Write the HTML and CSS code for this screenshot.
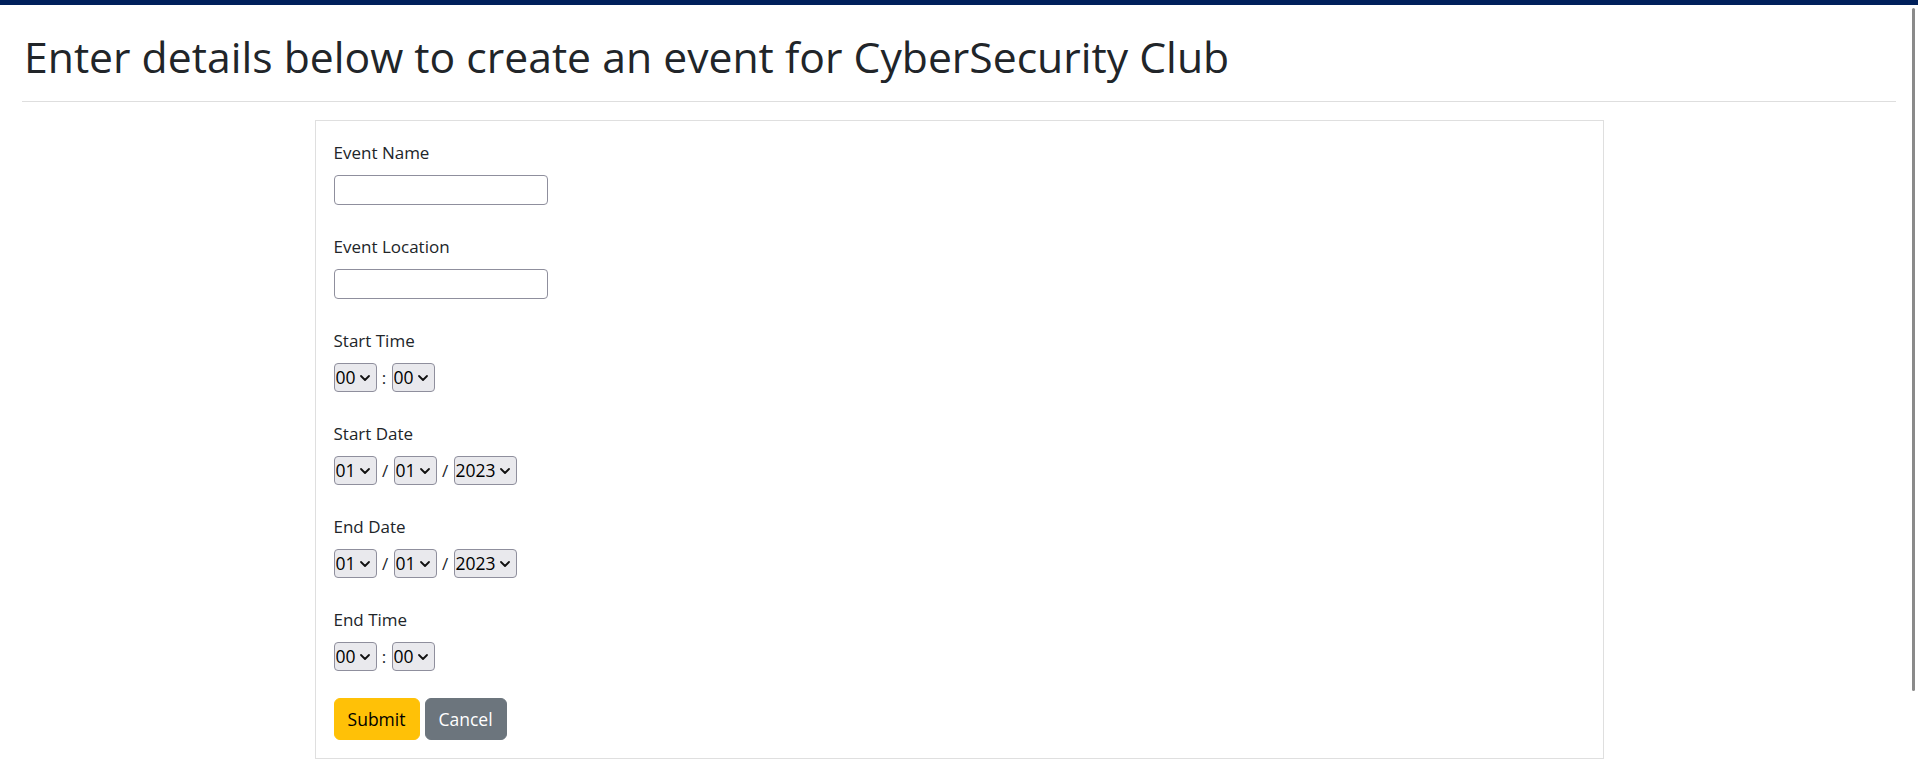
FILE: index.html
```html
<!DOCTYPE html>
<html lang="en">
<head>
<meta charset="utf-8">
<title>Create Event - CyberSecurity Club</title>
<link rel="stylesheet" href="styles.css">
</head>
<body>
<div class="topbar"></div>
<header class="page-head">
  <h1>Enter details below to create an event for CyberSecurity Club</h1>
  <hr class="rule">
</header>
<main class="wrap">
  <form class="card">
    <div class="field">
      <label for="ev-name">Event Name</label>
      <input id="ev-name" class="text-in" type="text">
    </div>
    <div class="field">
      <label for="ev-loc">Event Location</label>
      <input id="ev-loc" class="text-in" type="text">
    </div>
    <div class="field">
      <label>Start Time</label>
      <div class="pick">
        <span class="sel w2"><select><option>00</option></select><svg class="chev" viewBox="0 0 10 6"><path d="M1 1l4 4 4-4"/></svg></span>
        <span class="sep colon">:</span>
        <span class="sel w2"><select><option>00</option></select><svg class="chev" viewBox="0 0 10 6"><path d="M1 1l4 4 4-4"/></svg></span>
      </div>
    </div>
    <div class="field">
      <label>Start Date</label>
      <div class="pick">
        <span class="sel w2"><select><option>01</option></select><svg class="chev" viewBox="0 0 10 6"><path d="M1 1l4 4 4-4"/></svg></span>
        <span class="sep slash">/</span>
        <span class="sel w2"><select><option>01</option></select><svg class="chev" viewBox="0 0 10 6"><path d="M1 1l4 4 4-4"/></svg></span>
        <span class="sep slash">/</span>
        <span class="sel w4"><select><option>2023</option></select><svg class="chev" viewBox="0 0 10 6"><path d="M1 1l4 4 4-4"/></svg></span>
      </div>
    </div>
    <div class="field">
      <label>End Date</label>
      <div class="pick">
        <span class="sel w2"><select><option>01</option></select><svg class="chev" viewBox="0 0 10 6"><path d="M1 1l4 4 4-4"/></svg></span>
        <span class="sep slash">/</span>
        <span class="sel w2"><select><option>01</option></select><svg class="chev" viewBox="0 0 10 6"><path d="M1 1l4 4 4-4"/></svg></span>
        <span class="sep slash">/</span>
        <span class="sel w4"><select><option>2023</option></select><svg class="chev" viewBox="0 0 10 6"><path d="M1 1l4 4 4-4"/></svg></span>
      </div>
    </div>
    <div class="field last">
      <label>End Time</label>
      <div class="pick">
        <span class="sel w2"><select><option>00</option></select><svg class="chev" viewBox="0 0 10 6"><path d="M1 1l4 4 4-4"/></svg></span>
        <span class="sep colon">:</span>
        <span class="sel w2"><select><option>00</option></select><svg class="chev" viewBox="0 0 10 6"><path d="M1 1l4 4 4-4"/></svg></span>
      </div>
    </div>
    <div class="actions">
      <button type="submit" class="btn btn-submit">Submit</button>
      <button type="button" class="btn btn-cancel">Cancel</button>
    </div>
  </form>
</main>
<div class="scrollbar"></div>
</body>
</html>
```
FILE: styles.css
```css
* { box-sizing: border-box; }

html, body {
  margin: 0;
  padding: 0;
  background: #ffffff;
}

body {
  font-family: "Open Sans", "Noto Sans", "Liberation Sans", sans-serif;
  color: #212529;
  font-size: 17px;
  position: relative;
  min-height: 777px;
}

.topbar {
  height: 5px;
  background: #00205b;
}

.page-head {
  padding: 0 22px;
}

.page-head h1 {
  margin: 27px 0 19px 0;
  font-size: 42.7px;
  line-height: 50px;
  font-weight: 400;
  color: #212529;
  padding-left: 2px;
  white-space: nowrap;
}

.rule {
  margin: 0;
  border: 0;
  height: 0;
  border-top: 1px solid #dedede;
}

.wrap {
  display: flex;
  justify-content: center;
  margin-top: 18px;
}

.card {
  width: 1289px;
  border: 1px solid #dfdfdf;
  padding: 19px 18px 18px 18px;
  display: flex;
  flex-direction: column;
}

.field {
  display: flex;
  flex-direction: column;
  align-items: flex-start;
  margin-bottom: 29px;
}

.field.last {
  margin-bottom: 27px;
}

.field label {
  display: block;
  font-size: 17px;
  line-height: 26px;
  margin-bottom: 9px;
  color: #212529;
}

.text-in {
  width: 214px;
  height: 30px;
  border: 1px solid #8f8f9d;
  border-radius: 4px;
  background: #ffffff;
  font: inherit;
  padding: 1px 3px;
  margin: 0;
}

.pick {
  display: flex;
  align-items: center;
  height: 29px;
}

.sel {
  position: relative;
  display: inline-block;
  height: 29px;
}

.sel select {
  appearance: none;
  -webkit-appearance: none;
  height: 29px;
  width: 100%;
  margin: 0;
  border: 1px solid #8f8f9d;
  border-radius: 4px;
  background: #e9e9ed;
  color: #000000;
  font-family: "Open Sans", "Noto Sans", "Liberation Sans", sans-serif;
  font-size: 17.5px;
  line-height: 27px;
  padding: 0 0 0 1px;
}

.sel.w2 { width: 43px; }
.sel.w4 { width: 63px; }

.chev {
  position: absolute;
  right: 7px;
  top: 12px;
  width: 10px;
  height: 6px;
  pointer-events: none;
  overflow: visible;
}

.chev path {
  fill: none;
  stroke: #111111;
  stroke-width: 1.8;
  stroke-linecap: round;
  stroke-linejoin: round;
}

.sep {
  display: inline-block;
  text-align: center;
  font-size: 17px;
  color: #212529;
  line-height: 29px;
}

.sep.colon { width: 15px; }
.sep.slash { width: 17px; }

.actions {
  display: flex;
  gap: 5px;
}

.btn {
  height: 42px;
  border-radius: 6px;
  border: 1px solid transparent;
  font-family: "Open Sans", "Noto Sans", "Liberation Sans", sans-serif;
  font-size: 17.5px;
  padding: 0;
  margin: 0;
  cursor: pointer;
}

.btn-submit {
  width: 86px;
  background: #ffc107;
  border-color: #ffc107;
  color: #000000;
}

.btn-cancel {
  width: 82px;
  background: #6c757d;
  border-color: #6c757d;
  color: #ffffff;
}

.scrollbar {
  position: absolute;
  top: 8px;
  right: 3px;
  width: 3px;
  height: 683px;
  background: #8a8a8a;
  border-radius: 2px;
}
```
